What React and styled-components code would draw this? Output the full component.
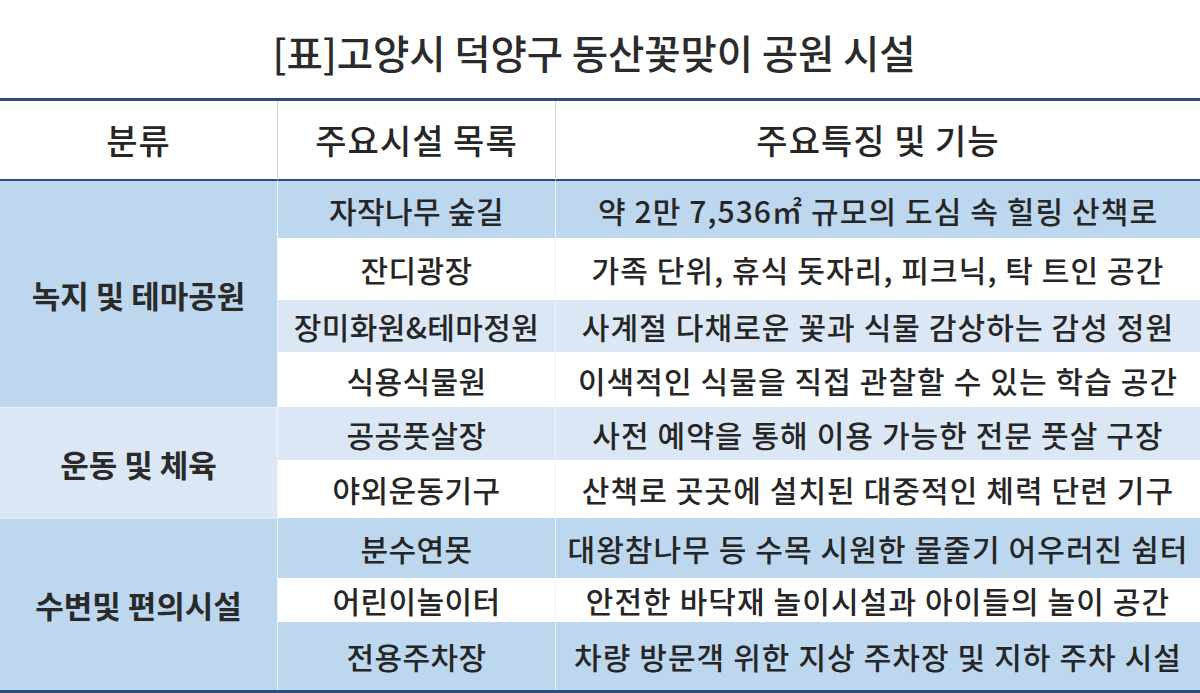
import React from 'react';
import styled, { createGlobalStyle } from 'styled-components';

const GlobalStyle = createGlobalStyle`
    html, body {
        margin: 0;
        padding: 0;
        background: #ffffff;
    }
    body {
        font-family: "Noto Sans CJK KR", "Noto Sans", sans-serif;
        color: #222222;
    }
`;

const NAVY = '#2f4d7c';

const TONES = {
    blue: '#bdd7ee',
    pale: '#dbe7f4',
    white: '#ffffff',
};

const Page = styled.div`
    width: 1200px;
    height: 693px;
    overflow: hidden;
    display: flex;
    flex-direction: column;
`;

const Title = styled.h1`
    margin: 0;
    height: 99px;
    display: flex;
    align-items: center;
    justify-content: center;
    padding: 4px 12px 0 0;
    box-sizing: border-box;
    font-size: 39.5px;
    font-weight: 500;
    color: #2b2b2b;
    letter-spacing: -0.1px;
`;

const Table = styled.table`
    width: 1200px;
    table-layout: fixed;
    border-collapse: separate;
    border-spacing: 0;
    border-top: 3px solid ${NAVY};
    border-bottom: 3px solid ${NAVY};
`;

const HeadRow = styled.tr`
    height: 80px;
`;

const HeadCell = styled.th`
    padding: 0 0 2px;
    font-size: 34px;
    font-weight: 500;
    letter-spacing: 1px;
    color: #262626;
    text-align: center;
    vertical-align: middle;
    border-bottom: 2px solid ${NAVY};
    border-left: ${({ $first }) => ($first ? 'none' : '1px solid #d6d6d6')};
`;

const Row = styled.tr`
    height: ${({ $h }) => $h}px;
`;

const GroupCell = styled.td`
    padding: 0;
    background: ${({ $tone }) => TONES[$tone]};
    font-size: 31px;
    font-weight: 700;
    color: #2a2a2a;
    text-align: center;
    vertical-align: middle;
    white-space: nowrap;
    border-top: ${({ $first }) => ($first ? 'none' : '1px solid #e6eef7')};
`;

const ItemCell = styled.td`
    padding: 0;
    background: ${({ $tone }) => TONES[$tone]};
    font-size: 30px;
    font-weight: 500;
    letter-spacing: 0.4px;
    color: #262626;
    text-align: center;
    vertical-align: middle;
    white-space: nowrap;
    border-left: 1px solid #eef3f9;
`;

const DescCell = styled(ItemCell)`
    letter-spacing: 1.1px;
`;

const groups = [
    {
        name: '녹지 및 테마공원',
        tone: 'blue',
        items: [
            { name: '자작나무 숲길', desc: '약 2만 7,536㎡ 규모의 도심 속 힐링 산책로', tone: 'blue', h: 57 },
            { name: '잔디광장', desc: '가족 단위, 휴식 돗자리, 피크닉, 탁 트인 공간', tone: 'white', h: 62 },
            { name: '장미화원&테마정원', desc: '사계절 다채로운 꽃과 식물 감상하는 감성 정원', tone: 'pale', h: 52 },
            { name: '식용식물원', desc: '이색적인 식물을 직접 관찰할 수 있는 학습 공간', tone: 'white', h: 55 },
        ],
    },
    {
        name: '운동 및 체육',
        tone: 'pale',
        items: [
            { name: '공공풋살장', desc: '사전 예약을 통해 이용 가능한 전문 풋살 구장', tone: 'pale', h: 53 },
            { name: '야외운동기구', desc: '산책로 곳곳에 설치된 대중적인 체력 단련 기구', tone: 'white', h: 58 },
        ],
    },
    {
        name: '수변및 편의시설',
        tone: 'blue',
        items: [
            { name: '분수연못', desc: '대왕참나무 등 수목 시원한 물줄기 어우러진 쉼터', tone: 'blue', h: 60 },
            { name: '어린이놀이터', desc: '안전한 바닥재 놀이시설과 아이들의 놀이 공간', tone: 'white', h: 43 },
            { name: '전용주차장', desc: '차량 방문객 위한 지상 주차장 및 지하 주차 시설', tone: 'blue', h: 68 },
        ],
    },
];

export default function App(){
    return (
        <Page>
            <GlobalStyle />
            <Title>[표]고양시 덕양구 동산꽃맞이 공원 시설</Title>
            <Table>
                <colgroup>
                    <col style={{ width: 277 }} />
                    <col style={{ width: 278 }} />
                    <col style={{ width: 645 }} />
                </colgroup>
                <thead>
                    <HeadRow>
                        <HeadCell $first>분류</HeadCell>
                        <HeadCell>주요시설 목록</HeadCell>
                        <HeadCell>주요특징 및 기능</HeadCell>
                    </HeadRow>
                </thead>
                <tbody>
                    {groups.map((group, gi) => group.items.map((item, ii) => (
                        <Row key={item.name} $h={item.h}>
                            {ii === 0 && (
                                <GroupCell
                                    rowSpan={group.items.length}
                                    $tone={group.tone}
                                    $first={gi === 0}
                                >
                                    {group.name}
                                </GroupCell>
                            )}
                            <ItemCell $tone={item.tone}>{item.name}</ItemCell>
                            <DescCell $tone={item.tone}>{item.desc}</DescCell>
                        </Row>
                    )))}
                </tbody>
            </Table>
        </Page>
    );
}
